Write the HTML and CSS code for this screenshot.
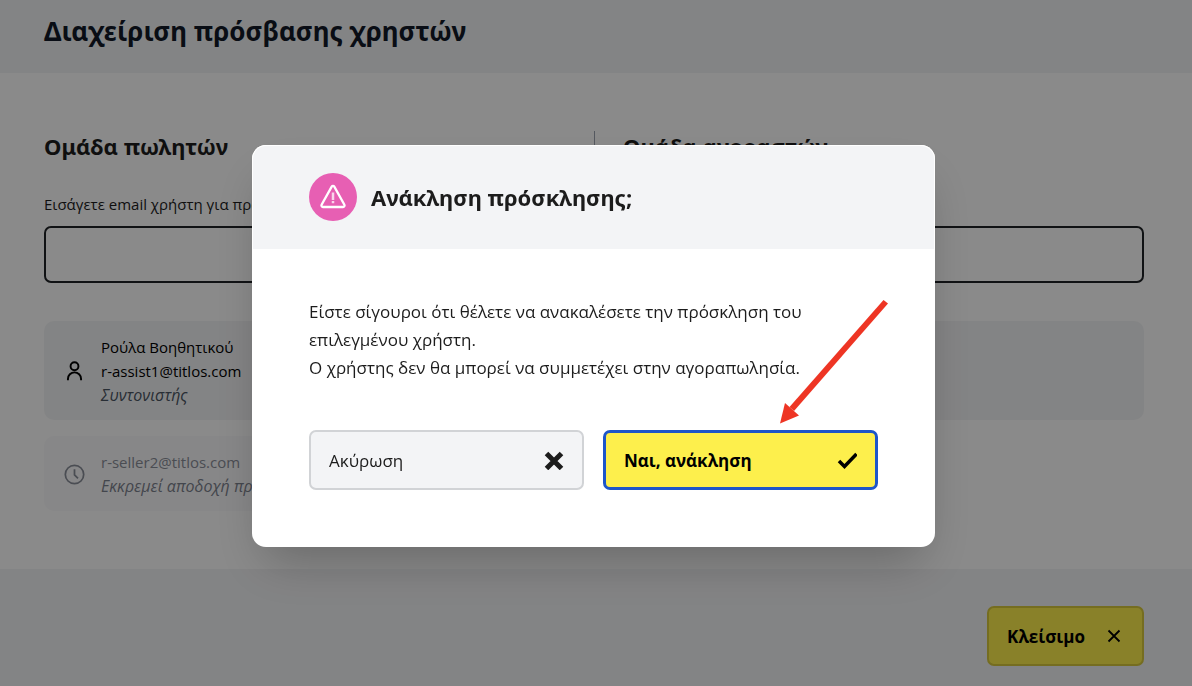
FILE: index.html
```html
<!DOCTYPE html>
<html lang="el">
<head>
<meta charset="utf-8">
<meta name="viewport" content="width=device-width, initial-scale=1">
<title>Διαχείριση πρόσβασης χρηστών</title>
<link rel="stylesheet" href="styles.css">
</head>
<body>
<div class="page">
  <header class="page-header">
    <h1 class="page-title">Διαχείριση πρόσβασης χρηστών</h1>
  </header>
  <main class="teams">
    <section class="team">
      <h2 class="team-title">Ομάδα πωλητών</h2>
      <label class="field-label" for="seller-email">Εισάγετε email χρήστη για πρόσκληση</label>
      <input class="field-input" id="seller-email" type="email">
      <ul class="members">
        <li class="member">
          <svg class="member-icon" viewBox="0 0 24 24" fill="none" stroke="currentColor" stroke-width="2.200"><circle cx="12" cy="6" r="4.500"/><path d="M4.500 22v-1.500a7.500 7.500 0 0 1 15 0v1.500"/></svg>
          <div class="member-info">
            <span>Ρούλα Βοηθητικού</span>
            <span>r-assist1@titlos.com</span>
            <em class="member-role">Συντονιστής</em>
          </div>
        </li>
        <li class="member member-pending">
          <svg class="member-icon" viewBox="0 0 24 24" fill="none" stroke="currentColor" stroke-width="2"><circle cx="12" cy="12" r="10.500"/><path d="M12 6v6.500l4 4"/></svg>
          <div class="member-info">
            <span>r-seller2@titlos.com</span>
            <em class="member-role">Εκκρεμεί αποδοχή πρόσκλησης</em>
          </div>
        </li>
      </ul>
    </section>
    <section class="team team-buyers">
      <h2 class="team-title">Ομάδα αγοραστών</h2>
      <label class="field-label" for="buyer-email">Εισάγετε email χρήστη για πρόσκληση</label>
      <input class="field-input" id="buyer-email" type="email">
      <ul class="members">
        <li class="member member-blank"></li>
      </ul>
    </section>
  </main>
  <footer class="page-footer">
    <button class="button button-close" type="button">Κλείσιμο
      <svg class="close-icon" viewBox="0 0 20 20" fill="none" stroke="currentColor" stroke-width="1.800"><path d="M4.500 4.500l11 11M15.500 4.500l-11 11"/></svg>
    </button>
  </footer>
</div>

<div class="overlay">
  <div class="dialog" role="dialog" aria-modal="true" aria-labelledby="dialog-title">
    <div class="dialog-header">
      <span class="warning-badge">
        <svg class="warning-icon" viewBox="0 0 28 28" fill="none" stroke="currentColor" stroke-linejoin="round"><path stroke-width="2.300" d="M12.700 3.600a1.500 1.500 0 0 1 2.600 0l10.100 18.200a1.500 1.500 0 0 1-1.300 2.200H3.900a1.500 1.500 0 0 1-1.300-2.200z"/><path stroke-width="2.500" stroke-opacity=".75" d="M14 9.500v7.500M14 18v2.200"/></svg>
      </span>
      <h2 class="dialog-title" id="dialog-title">Ανάκληση πρόσκλησης;</h2>
    </div>
    <div class="dialog-body">
      <p class="dialog-text">Είστε σίγουροι ότι θέλετε να ανακαλέσετε την πρόσκληση του επιλεγμένου χρήστη.<br>Ο χρήστης δεν θα μπορεί να συμμετέχει στην αγοραπωλησία.</p>
      <div class="dialog-actions">
        <button class="button button-cancel" type="button">Ακύρωση
          <svg class="action-icon" viewBox="0 0 20 20" fill="none" stroke="currentColor" stroke-width="5"><path d="M2.500 3.500l15 15M17.500 3.500l-15 15"/></svg>
        </button>
        <button class="button button-confirm" type="button">Ναι, ανάκληση
          <svg class="action-icon" viewBox="0 0 20 20" fill="none" stroke="currentColor" stroke-width="3.500"><path d="M2 11l5.500 5.500L19.500 4"/></svg>
        </button>
      </div>
    </div>
    <svg class="pointer-arrow" viewBox="0 0 108 124" fill="#ee3524"><path d="M103.500 0l4.500 3.500L14 111l-4.500-4z"/><path d="M0 123.500l5-20.500 14 12.500z"/></svg>
  </div>
</div>
</body>
</html>
```
FILE: styles.css
```css
* {
  box-sizing: border-box;
}

body {
  margin: 0;
  background: #fff;
  color: #1c1c1c;
  font-family: "Open Sans", "Noto Sans", sans-serif;
  font-size: 17px;
}

h1,
h2,
p,
ul {
  margin: 0;
  padding: 0;
}

h1,
h2 {
  font-family: "Noto Sans", "Open Sans", sans-serif;
  font-weight: 700;
}

svg {
  display: block;
  flex: none;
}

.page {
  display: flex;
  flex-direction: column;
  min-height: 100vh;
}

.page-header {
  padding: 11px 48px 22px 44px;
  background: #f3f4f6;
}

.page-title {
  color: #111827;
  font-size: 26px;
  line-height: 40px;
}

.teams {
  display: grid;
  grid-template-columns: 1fr 1fr;
  padding: 58px 48px 58px 44px;
}

.team {
  display: flex;
  flex-direction: column;
  padding-right: 28px;
}

.team-buyers {
  padding: 0 0 0 28px;
  border-left: 1px solid #9ca3af;
}

.team-title {
  font-size: 22px;
  line-height: 30px;
}

.field-label {
  margin-top: 31px;
  font-size: 15px;
  line-height: 24px;
}

.field-input {
  width: 100%;
  height: 57px;
  margin-top: 10px;
  padding: 0 16px;
  border: 2px solid #1f2226;
  border-radius: 7px;
  background: #fff;
  font: inherit;
}

.members {
  display: flex;
  flex-direction: column;
  gap: 16px;
  margin-top: 38px;
  list-style: none;
}

.member {
  display: flex;
  align-items: center;
  gap: 16px;
  padding: 14px 20px 13px;
  border-radius: 10px;
  background: #f3f4f6;
  color: #000;
  font-size: 15px;
  line-height: 24px;
}

.member-blank {
  min-height: 99px;
}

.member-pending {
  background: #fafafb;
  color: #8a8e99;
}

.member-icon {
  width: 21px;
  height: 21px;
}

.member-info {
  display: flex;
  flex-direction: column;
  white-space: nowrap;
}

.member-role {
  color: #4b5563;
  font-size: 16px;
}

.member-pending .member-role {
  color: #7d828e;
}

.page-footer {
  display: flex;
  flex: 1;
  align-items: flex-start;
  justify-content: flex-end;
  padding: 37px 48px 20px 44px;
  background: #f3f4f6;
}

.button {
  display: flex;
  align-items: center;
  justify-content: space-between;
  height: 60px;
  padding: 0 18px;
  border: 2px solid #d1d3d6;
  border-radius: 7px;
  background: #f3f4f6;
  color: #1c1c1c;
  font: inherit;
  cursor: pointer;
}

.button-close {
  gap: 19px;
  border-color: #d8c93c;
  background: #fdef4c;
  color: #000;
  font-weight: 700;
}

.close-icon {
  width: 20px;
  height: 20px;
}

.overlay {
  position: fixed;
  inset: 0;
  display: flex;
  align-items: center;
  justify-content: center;
  padding: 6px 5px 0 0;
  background: rgba(0, 0, 0, 0.46);
}

.dialog {
  position: relative;
  width: 100%;
  max-width: 683px;
  border-radius: 14px;
  background: #fff;
  box-shadow: 0 25px 50px -12px rgba(0, 0, 0, 0.25);
}

.dialog-header {
  display: flex;
  align-items: center;
  gap: 14px;
  padding: 27px 56px 28px;
  border: 1px solid #fff;
  border-bottom: 0;
  border-radius: 14px 14px 0 0;
  background: #f3f4f6;
}

.warning-badge {
  display: grid;
  place-items: center;
  width: 48px;
  height: 48px;
  border-radius: 50%;
  background: #e75fb3;
  color: #fff;
}

.warning-icon {
  width: 28px;
  height: 28px;
}

.dialog-title {
  font-size: 22px;
  line-height: 30px;
}

.dialog-body {
  padding: 49px 57px 57px;
}

.dialog-text {
  line-height: 28px;
}

.dialog-actions {
  display: grid;
  grid-template-columns: 1fr 1fr;
  gap: 19px;
  margin-top: 48px;
}

.button-confirm {
  border: 3px solid #1d56c9;
  background: #fdef4c;
  color: #000;
  font-weight: 700;
}

.action-icon {
  width: 20px;
  height: 20px;
}

.pointer-arrow {
  position: absolute;
  top: 155px;
  right: 47px;
  width: 108px;
  height: 124px;
  pointer-events: none;
}
```
